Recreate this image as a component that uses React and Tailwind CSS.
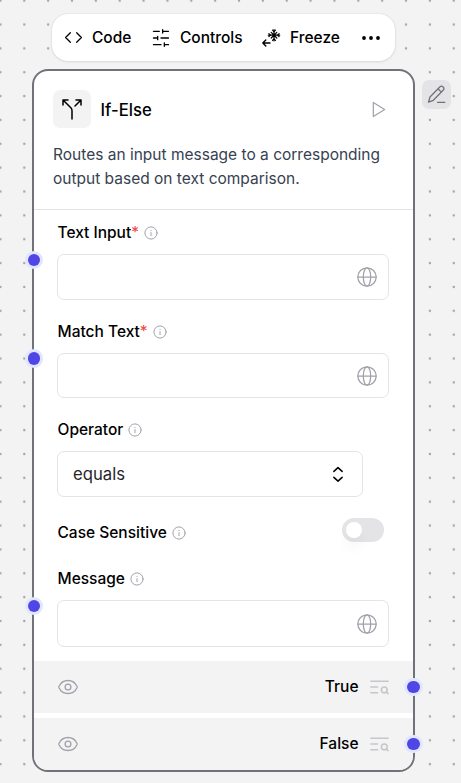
import React from "react";

const stroke = {
  fill: "none",
  stroke: "currentColor",
  strokeLinecap: "round",
  strokeLinejoin: "round",
};

function InfoIcon() {
  return (
    <svg viewBox="0 0 14 14" className="h-[14px] w-[14px] shrink-0 text-[#a1a1aa]" {...stroke} strokeWidth="1">
      <circle cx="7" cy="7" r="6.1" />
      <path d="M7 6.600v3.100M7 4.300v.2" />
    </svg>
  );
}

function GlobeIcon() {
  return (
    <svg viewBox="0 0 20 20" className="h-5 w-5 shrink-0 text-[#a1a1aa]" {...stroke} strokeWidth="1.250">
      <circle cx="10" cy="10" r="9.200" />
      <ellipse cx="10" cy="10" rx="3.700" ry="9.200" />
      <path d="M.8 10h18.400" />
    </svg>
  );
}

function EyeIcon() {
  return (
    <svg viewBox="0 0 20 16" className="h-4 w-5 shrink-0 text-[#a1a1aa]" {...stroke} strokeWidth="1.300">
      <path d="M.9 8.400a1.200 1.200 0 0 1 0-.8C2.500 4 5.900 1.500 10 1.500S17.500 4 19.100 7.600a1.200 1.200 0 0 1 0 .8C17.500 12 14.100 14.500 10 14.500S2.500 12 .9 8.400Z" />
      <circle cx="10" cy="8" r="2.900" />
    </svg>
  );
}

function TextSearchIcon() {
  return (
    <svg viewBox="0 0 24 24" className="h-[23px] w-[23px] shrink-0 text-[#c6c6cc]" {...stroke} strokeWidth="1.600">
      <path d="M21 5.500H3M10 11.500H3M10 17.500H3" />
      <circle cx="17" cy="14.500" r="3" />
      <path d="m21 18.500-1.900-1.900" />
    </svg>
  );
}

function CodeIcon() {
  return (
    <svg viewBox="0 0 24 24" className="h-[19px] w-[19px]" {...stroke} strokeWidth="1.600">
      <path d="m16 18 6-6-6-6M8 6l-6 6 6 6" />
    </svg>
  );
}

function ControlsIcon() {
  return (
    <svg viewBox="0 0 24 24" className="h-[20px] w-[20px]" {...stroke} strokeWidth="1.600">
      <path d="M21 4h-7M10 4H3M21 12h-9M8 12H3M21 20h-5M12 20H3M14 2v4M8 10v4M16 18v4" />
    </svg>
  );
}

function FreezeIcon() {
  return (
    <svg viewBox="0 0 20 20" className="h-[20px] w-[20px]" {...stroke} strokeWidth="1.200">
      <path d="M13 1.500v11.400M7.300 7.200h11.400M10.200 4.400l5.600 5.600M15.800 4.400l-5.600 5.600" />
      <path d="m11.500 2.100 1.500 1.500 1.500-1.500M11.500 12.300l1.500-1.500 1.500 1.500M7.900 5.700l1.500 1.500-1.500 1.500M18.100 5.700l-1.500 1.500 1.500 1.500" />
      <path d="M9 15H1.800M4.800 12l-3 3 3 3" strokeWidth="1.400" />
    </svg>
  );
}

function ToolbarItem({ icon, children }) {
  return (
    <button className="flex h-full items-center gap-[9px]">
      {icon}
      <span>{children}</span>
    </button>
  );
}

function Handle({ className }) {
  return <span className={`absolute h-[12.500px] w-[12.500px] rounded-full bg-[#4f46e5] ring-[3px] ring-[#e0e7ff] ${className}`} />;
}

function Label({ children, required, className = "" }) {
  return (
    <div className={`flex h-5 items-center pl-[0.500px] text-[15.500px] font-medium ${className}`}>
      <span>{children}</span>
      {required && <span className="font-normal text-[#ef4444]">*</span>}
      <span className="ml-[5px]">
        <InfoIcon />
      </span>
    </div>
  );
}

function TextField({ className }) {
  return (
    <div className={`flex w-[332px] items-center justify-end rounded-[7px] border border-[#e4e4e7] pr-[11px] ${className}`}>
      <GlobeIcon />
    </div>
  );
}

function OutputRow({ label, className }) {
  return (
    <div className={`flex shrink-0 items-center bg-[#f3f3f3] pl-6 pr-[22.500px] ${className}`}>
      <EyeIcon />
      <span className="ml-auto mr-[9px] text-[15.500px] font-medium">{label}</span>
      <TextSearchIcon />
    </div>
  );
}

export default function App() {
  return (
    <div className="relative flex h-[783px] w-[461px] flex-col overflow-hidden bg-[#f3f3f3] pt-[14px] font-['Inter',sans-serif] text-black">
      <svg className="absolute inset-0 h-full w-full">
        <defs>
          <pattern id="dots" x="-11.500" y="-11.300" width="23.860" height="23.860" patternUnits="userSpaceOnUse">
            <circle cx="11.930" cy="11.930" r="1.200" fill="#a3a3ad" />
          </pattern>
        </defs>
        <rect width="461" height="783" fill="url(#dots)" />
      </svg>

      <div className="relative ml-[52px] flex h-[47px] w-[343px] shrink-0 items-center rounded-[16px] bg-white pl-[12px] text-[15.500px] font-medium shadow-[0_0_2px_rgba(0,0,0,0.12),0_1px_3px_rgba(0,0,0,0.08)]">
        <ToolbarItem icon={<CodeIcon />}>Code</ToolbarItem>
        <div className="ml-[19.500px] h-full">
          <ToolbarItem icon={<ControlsIcon />}>Controls</ToolbarItem>
        </div>
        <div className="ml-[18.500px] h-full">
          <ToolbarItem icon={<FreezeIcon />}>Freeze</ToolbarItem>
        </div>
        <svg viewBox="0 0 20 6" className="ml-[21px] h-[6px] w-5" fill="currentColor">
          <circle cx="3" cy="3" r="1.900" />
          <circle cx="10" cy="3" r="1.900" />
          <circle cx="17" cy="3" r="1.900" />
        </svg>
      </div>

      <div className="relative ml-[32px] mt-[8px] flex h-[703px] w-[383px] shrink-0 flex-col rounded-[16px] border-2 border-[#71717a] bg-white">
        <div className="h-[139px] shrink-0 border-b border-[#e4e4e7] pl-[19px] pr-[27px] pt-[19px]">
          <div className="flex h-[38px] items-center">
            <span className="flex h-[38px] w-[38px] items-center justify-center rounded-[7px] bg-[#f3f3f3]">
              <svg viewBox="0 0 24 24" className="h-6 w-6" {...stroke} strokeWidth="1.500">
                <path d="M16 3h5v5M8 3H3v5M12 22v-8.300a4 4 0 0 0-1.172-2.872L3 3M15 9l6-6" />
              </svg>
            </span>
            <span className="ml-[9.500px] pt-[4px] text-[16.700px] font-medium">If-Else</span>
            <svg viewBox="0 0 14 18" className="ml-auto h-[17px] w-[14px] text-[#a1a1aa]" {...stroke} strokeWidth="1.300">
              <path d="M1 1.500v15L13 9Z" />
            </svg>
          </div>
          <p className="mt-[15px] whitespace-nowrap text-[15.500px] leading-6 text-[#374151]">
            Routes an input message to a corresponding
            <br />
            output based on text comparison.
          </p>
        </div>

        <div className="flex h-[451px] shrink-0 flex-col pl-[23px] pt-[13px]">
          <Label required>Text Input</Label>
          <TextField className="mt-[11px] h-[46px]" />
          <Label required className="mt-[22px]">Match Text</Label>
          <TextField className="mt-[11px] h-[45px]" />
          <Label className="mt-[22px]">Operator</Label>
          <div className="mt-[11px] flex h-[46px] w-[306px] items-center justify-between rounded-[7px] border border-[#e4e4e7] pl-[15px] pr-[15px] text-[16.700px] text-[#27272a]">
            <span className="pt-px">equals</span>
            <svg viewBox="0 0 24 24" className="h-[18px] w-[18px] text-black" {...stroke} strokeWidth="2">
              <path d="m6.500 16.500 5.500 5 5.500-5M6.500 8.500l5.500-5 5.500 5" />
            </svg>
          </div>
          <div className="mt-[21px] flex h-[24px] justify-between">
            <Label className="mt-[5px]">Case Sensitive</Label>
            <span className="mr-[29px] flex h-[24px] w-[42px] items-center rounded-full bg-[#e4e4e7] pl-[4px]">
              <span className="h-4 w-4 rounded-full bg-white shadow-[0_10px_14px_-3px_rgba(0,0,0,0.1)]" />
            </span>
          </div>
          <Label className="mt-[27px]">Message</Label>
          <TextField className="mt-[11px] h-[47px]" />
        </div>

        <OutputRow label="True" className="h-[52px]" />
        <OutputRow label="False" className="mt-[5px] h-[52px] rounded-b-[14px]" />

        <Handle className="left-[-6.500px] top-[182.500px]" />
        <Handle className="left-[-6.500px] top-[281px]" />
        <Handle className="left-[-6.500px] top-[528.500px]" />
        <Handle className="right-[-6.500px] top-[609.500px]" />
        <Handle className="right-[-6.500px] top-[666.500px]" />
      </div>

      <div className="absolute left-[422px] top-[80px] flex h-[29px] w-[29px] items-center justify-center rounded-[7px] bg-[#e4e4e7] text-[#71717a]">
        <svg viewBox="0 0 19 19" className="h-[19px] w-[19px]" {...stroke} strokeWidth="1.300">
          <path d="M1.500 17.200 3 12 12.800 2a2.300 2.300 0 0 1 3.300 3.300L6.300 15.300ZM11 3.800l3.300 3.300M10.500 17.300h7.300" />
        </svg>
      </div>
    </div>
  );
}
